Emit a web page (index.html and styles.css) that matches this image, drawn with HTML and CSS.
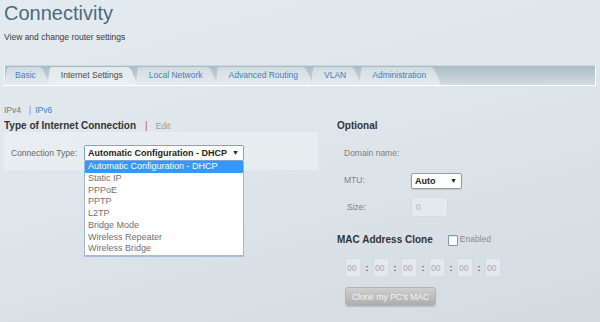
FILE: index.html
```html
<!DOCTYPE html>
<html lang="en">
<head>
<meta charset="utf-8">
<title>Connectivity</title>
<link rel="stylesheet" href="styles.css">
</head>
<body>
<header class="page-head">
  <h1 class="title">Connectivity</h1>
  <p class="subtitle">View and change router settings</p>
</header>

<nav class="tabs">
  <a class="tab">Basic</a>
  <a class="tab tab-active">Internet Settings</a>
  <a class="tab">Local Network</a>
  <a class="tab">Advanced Routing</a>
  <a class="tab">VLAN</a>
  <a class="tab">Administration</a>
</nav>

<div class="subnav">
  <span class="subnav-current">IPv4</span><span class="subnav-sep">|</span><a class="subnav-link">IPv6</a>
</div>

<main class="columns">
  <section class="col-left">
    <h2 class="section-title">Type of Internet Connection<span class="title-sep">|</span><span class="title-edit">Edit</span></h2>
    <div class="panel">
      <span class="field-label">Connection Type:</span>
      <div class="select-wrap">
        <div class="select select-focus">Automatic Configuration - DHCP<span class="caret">&#9660;</span></div>
        <ul class="dropdown">
          <li class="option option-selected">Automatic Configuration - DHCP</li>
          <li class="option">Static IP</li>
          <li class="option">PPPoE</li>
          <li class="option">PPTP</li>
          <li class="option">L2TP</li>
          <li class="option">Bridge Mode</li>
          <li class="option">Wireless Repeater</li>
          <li class="option">Wireless Bridge</li>
        </ul>
      </div>
    </div>
  </section>

  <section class="col-right">
    <h2 class="section-title">Optional</h2>
    <div class="form-grid">
      <span class="form-label">Domain name:</span>
      <span></span>
      <span class="form-label">MTU:</span>
      <div class="select select-small">Auto<span class="caret">&#9660;</span></div>
      <span class="form-label form-label-indent">Size:</span>
      <input class="text-input text-size" type="text" value="0" disabled>
    </div>

    <h2 class="section-title mac-title">MAC Address Clone<span class="checkbox"></span><span class="check-label">Enabled</span></h2>
    <div class="mac-row">
      <input class="text-input mac-input" type="text" value="00" disabled><span class="mac-sep">:</span>
      <input class="text-input mac-input" type="text" value="00" disabled><span class="mac-sep">:</span>
      <input class="text-input mac-input" type="text" value="00" disabled><span class="mac-sep">:</span>
      <input class="text-input mac-input" type="text" value="00" disabled><span class="mac-sep">:</span>
      <input class="text-input mac-input" type="text" value="00" disabled><span class="mac-sep">:</span>
      <input class="text-input mac-input" type="text" value="00" disabled>
    </div>
    <button class="btn-clone" type="button" disabled>Clone my PC's MAC</button>
  </section>
</main>
</body>
</html>
```

FILE: styles.css
```css
html {
  height: 100%;
  background: #dde5ea;
}

body {
  margin: 0;
  padding: 1px 4px 0;
  height: 322px;
  box-sizing: border-box;
  overflow: hidden;
  font-family: "Liberation Sans", Arial, sans-serif;
  font-size: 8.5px;
  color: #333;
  background: linear-gradient(165deg, #e4ebf0 0%, #dfe6eb 45%, #d3dbe0 100%);
}

.title {
  margin: 0;
  font-size: 20px;
  line-height: 24px;
  font-weight: normal;
  color: #4b6a80;
}

.subtitle {
  margin: 6px 0 0;
  line-height: 12px;
  color: #3a3a3a;
}

/* Tabs */
.tabs {
  display: flex;
  margin-top: 22px;
  height: 21px;
  box-sizing: border-box;
  padding-top: 1px;
  border-top: 1px solid #cdd7dc;
  border-left: 1px solid #f2f5f7;
  border-right: 1px solid #ffffff;
  border-bottom: 1px solid #ffffff;
  background: linear-gradient(#a9bcc6, #c6d2d8 70%, #d2dce1);
}

.tab {
  position: relative;
  height: 18px;
  line-height: 17px;
  padding: 0 15px 0 13px;
  margin-right: -2px;
  color: #3b7fc6;
  text-decoration: none;
  white-space: nowrap;
  clip-path: polygon(0 100%, 2px 1px, 4px 0, calc(100% - 10px) 0, calc(100% - 7px) 2px, 100% 100%);
  background: linear-gradient(#cfdbe1, #dfe6ea 60%, #e4eaed);
}

.tab:first-child {
  padding: 0 14px 0 10px;
}

.tab-active {
  z-index: 1;
  color: #4a4a4a;
  background: linear-gradient(#e2e9ec, #ebf0f2);
}

/* Sub navigation */
.subnav {
  margin-top: 18px;
  line-height: 12px;
}

.subnav-current {
  color: #777;
}

.subnav-sep {
  margin: 0 4px 0 8px;
  color: #8a8a8a;
}

.subnav-link {
  color: #3b7fc6;
}

/* Columns */
.columns {
  display: grid;
  grid-template-columns: 314px 1fr;
  column-gap: 19px;
  margin-top: 3px;
}

.section-title {
  margin: 0;
  font-size: 10px;
  line-height: 14px;
  font-weight: bold;
  color: #333;
  display: flex;
  align-items: center;
  white-space: nowrap;
}

.title-sep {
  margin: 0 8px 0 9px;
  font-weight: normal;
  color: #c2603e;
}

.title-edit {
  font-weight: normal;
  font-size: 8.5px;
  color: #9a9a9a;
}

.panel {
  display: flex;
  align-items: flex-start;
  gap: 7px;
  margin-top: -1px;
  height: 38px;
  box-sizing: border-box;
  padding: 13px 7px 0;
  background: rgba(255, 255, 255, 0.28);
}

.field-label {
  line-height: 16px;
  color: #676767;
}

.select-wrap {
  position: relative;
}

.select {
  position: relative;
  height: 16px;
  box-sizing: border-box;
  padding: 0 3px;
  line-height: 14px;
  font-size: 9px;
  font-weight: bold;
  color: #222;
  background: #fff;
  border: 1px solid #9a9a9a;
  border-radius: 2px;
}

.select-focus {
  width: 160px;
  border-color: #7da2d8;
}

.caret {
  position: absolute;
  right: 4px;
  top: 0;
  font-size: 7px;
  line-height: 14px;
  color: #222;
}

.dropdown {
  position: absolute;
  top: 100%;
  left: 0;
  z-index: 5;
  width: 160px;
  box-sizing: border-box;
  margin: 0;
  padding: 0;
  list-style: none;
  background: #fff;
  border: 1px solid #a3b6d8;
  border-top: none;
  border-bottom: 2px solid #a9bbda;
}

.option {
  height: 11.75px;
  line-height: 11.75px;
  padding-left: 3px;
  font-size: 9px;
  color: #707070;
  white-space: nowrap;
}

.option-selected {
  background: #3399ff;
  color: #fff;
}

/* Right column */
.form-grid {
  display: grid;
  grid-template-columns: 67px auto;
  grid-auto-rows: 20px;
  row-gap: 7px;
  align-items: center;
  justify-items: start;
  margin-top: 10px;
  padding-left: 7px;
}

.form-label {
  color: #808080;
}

.form-label-indent {
  padding-left: 3px;
}

.select-small {
  width: 51px;
  margin-top: 2px;
  box-shadow: 0 1px 1px rgba(0, 0, 0, 0.12);
}

.text-input {
  box-sizing: border-box;
  margin: 0;
  font-family: "Liberation Sans", Arial, sans-serif;
  font-size: 8.5px;
  color: #b0b0b0;
  background: #e3e9ed;
  border: 1px solid #d4dce1;
  border-radius: 3px;
  outline: none;
}

.text-size {
  width: 37px;
  height: 20px;
  padding: 0 0 0 4px;
}

.mac-title {
  margin-top: 16px;
}

.checkbox {
  display: inline-block;
  width: 10px;
  height: 11px;
  box-sizing: border-box;
  margin-left: 15px;
  background: #fff;
  border: 1px solid #7f94ad;
  border-radius: 1px;
  box-shadow: inset 0 1px 1px rgba(0, 0, 0, 0.1);
}

.check-label {
  margin-left: 2px;
  margin-top: -2px;
  font-weight: normal;
  font-size: 8.5px;
  color: #8a8a8a;
}

.mac-row {
  display: flex;
  align-items: center;
  margin-top: 11px;
  padding-left: 8px;
}

.mac-input {
  width: 16px;
  height: 19px;
  padding: 0 0 0 1px;
  border-radius: 2px;
  color: #a8a8a8;
}

.mac-sep {
  width: 12px;
  text-align: center;
  font-weight: bold;
  color: #555;
}

.btn-clone {
  display: block;
  margin: 10px 0 0 8px;
  width: 91px;
  height: 19px;
  padding: 0;
  font-family: "Liberation Sans", Arial, sans-serif;
  font-size: 8.5px;
  color: #f6f6f6;
  background: linear-gradient(#cfcfcf, #adadad);
  border: 1px solid #b4b4b4;
  border-radius: 3px;
  box-shadow: 0 1px 1px rgba(0, 0, 0, 0.15);
}
```
